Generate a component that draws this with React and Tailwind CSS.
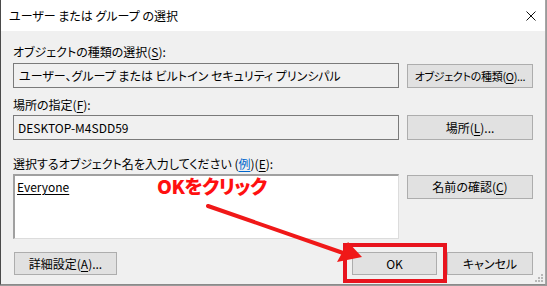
import React from "react";

const FONT = "font-['Yu_Gothic_UI','Noto_Sans_CJK_JP',sans-serif] [font-feature-settings:'palt']";

function U({ children }) {
  return <span className="underline underline-offset-2">{children}</span>;
}

function Btn({ children, className = "" }) {
  return (
    <div
      className={`flex items-center justify-center whitespace-nowrap bg-[#e1e1e1] border border-[#adadad] leading-none text-black ${className}`}
    >
      {children}
    </div>
  );
}

function Label({ children, className = "" }) {
  return <div className={`h-[14px] flex items-center text-[12px] leading-none ${className}`}>{children}</div>;
}

export default function App() {
  return (
    <div className={`w-[547px] h-[286px] bg-[#9a9a9a] overflow-hidden ${FONT}`}>
      <div className="relative w-[546px] h-[285px] bg-[#f0f0f0] border-l border-l-[#4a4a4a] border-r border-r-[#a6a6a6] border-b border-b-[#8a8a8a] flex flex-col">
        {/* title bar */}
        <div className="h-[31px] bg-white flex items-center justify-between pl-[8px] pr-[9px] shrink-0">
          <span className="text-[12px] text-black leading-none">ユーザー または グループ の選択</span>
          <svg width="10" height="10" viewBox="0 0 10 10">
            <path d="M0.5 0.5 L9.5 9.5 M9.5 0.5 L0.5 9.5" stroke="#111" strokeWidth="1" fill="none" />
          </svg>
        </div>

        {/* body */}
        <div className="flex flex-col pl-[12px] pr-[12px]">
          <Label className="mt-[14px]">
            オブジェクトの種類の選択(<U>S</U>):
          </Label>
          <div className="flex mt-[4px] gap-[8px]">
            <div className="w-[386px] h-[25px] border border-[#7a7a7a] bg-[#f0f0f0] flex items-center pl-[5px] text-[12px] leading-none">
              ユーザー、グループ または ビルトイン セキュリティ プリンシパル
            </div>
            <Btn className="w-[126px] h-[24px] mt-[1px] text-[11px] tracking-[-0.3px]">
              オブジェクトの種類(<U>O</U>)...
            </Btn>
          </div>

          <Label className="mt-[10px]">
            場所の指定(<U>F</U>):
          </Label>
          <div className="flex mt-[3px] gap-[8px]">
            <div className="w-[386px] h-[25px] border border-[#7a7a7a] bg-[#f0f0f0] flex items-center pl-[4px] text-[12px] leading-none">
              DESKTOP-M4SDD59
            </div>
            <Btn className="w-[126px] h-[25px] text-[12px]">
              場所(<U>L</U>)...
            </Btn>
          </div>

          <Label className="mt-[17px]">
            選択するオブジェクト名を入力してください (<span className="text-[#0066cc] underline underline-offset-2">例</span>)(<U>E</U>):
          </Label>
          <div className="flex mt-[3px] gap-[8px]">
            <div className="w-[386px] h-[65px] bg-white border-t-2 border-l-2 border-t-[#a0a0a0] border-l-[#a0a0a0] border-r border-b border-r-[#dcdcdc] border-b-[#dcdcdc] pl-[2px] pt-[5px] text-[12px] leading-none">
              <span className="underline underline-offset-2">Everyone</span>
            </div>
            <Btn className="w-[126px] h-[24px] mt-[1px] text-[12px]">
              名前の確認(<U>C</U>)
            </Btn>
          </div>

          <div className="flex mt-[13px] items-center">
            <Btn className="w-[103px] h-[23px] ml-[1px] text-[12px]">
              詳細設定(<U>A</U>)...
            </Btn>
            <div className="flex-1" />
            <Btn className="w-[85px] h-[23px] text-[12px]">OK</Btn>
            <Btn className="w-[86px] h-[23px] ml-[10px] text-[12px]">キャンセル</Btn>
          </div>
        </div>

        {/* resize grip */}
        <svg className="absolute right-[2px] bottom-[2px]" width="10" height="10" viewBox="0 0 10 10">
          {[
            [8, 0], [8, 3], [5, 3], [8, 6], [5, 6], [2, 6],
          ].map(([x, y], i) => (
            <rect key={i} x={x} y={y + 2} width="2" height="2" fill="#b8b8b8" />
          ))}
        </svg>

        {/* annotations */}
        <div className="absolute left-[342px] top-[243px] w-[104px] h-[40px] border-[4px] border-[#e8141e]" />
        <svg className="absolute left-0 top-0 pointer-events-none" width="546" height="285">
          <line x1="207" y1="206" x2="345" y2="254" stroke="#f01818" strokeWidth="4" strokeLinecap="round" />
          <polygon points="336,262 347,242 361,257" fill="#f01818" />
        </svg>
        <div className="absolute left-[156px] top-[176px] text-[19px] leading-none font-black text-[#ff1010] tracking-[-0.5px] font-['Noto_Sans_CJK_JP',sans-serif]">
          OKをクリック
        </div>
      </div>
    </div>
  );
}
